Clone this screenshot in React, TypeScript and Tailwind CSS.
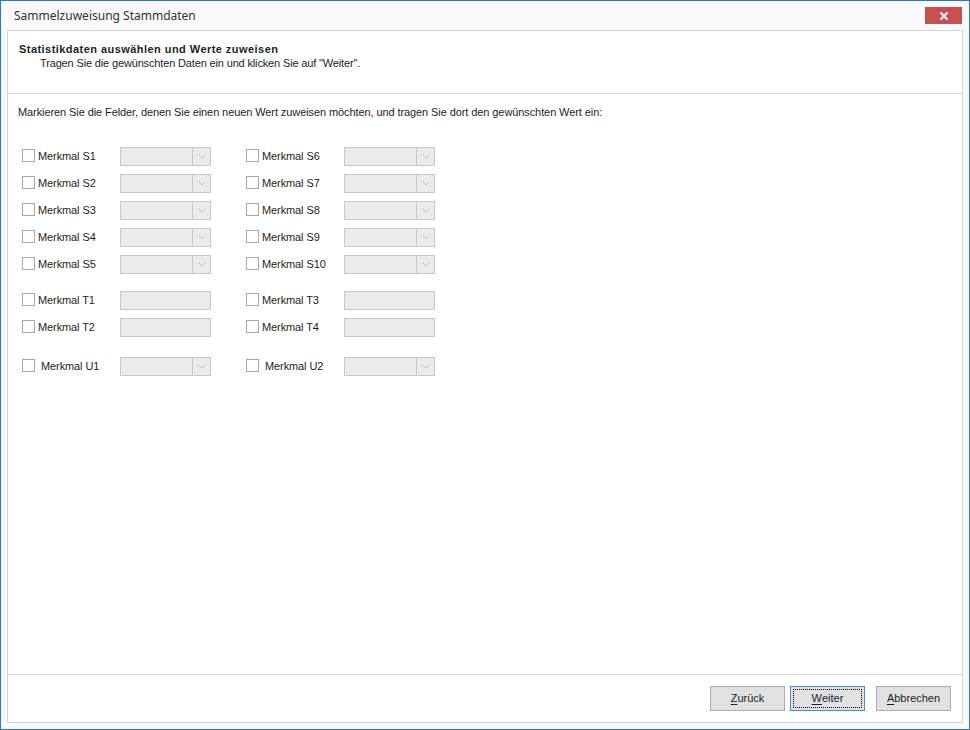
import React from "react"

type Field = { label: string; kind: "combo" | "text"; wide?: boolean }

const leftGroups: Field[][] = [
  [
    { label: "Merkmal S1", kind: "combo" },
    { label: "Merkmal S2", kind: "combo" },
    { label: "Merkmal S3", kind: "combo" },
    { label: "Merkmal S4", kind: "combo" },
    { label: "Merkmal S5", kind: "combo" },
  ],
  [
    { label: "Merkmal T1", kind: "text" },
    { label: "Merkmal T2", kind: "text" },
  ],
  [{ label: "Merkmal U1", kind: "combo", wide: true }],
]

const rightGroups: Field[][] = [
  [
    { label: "Merkmal S6", kind: "combo" },
    { label: "Merkmal S7", kind: "combo" },
    { label: "Merkmal S8", kind: "combo" },
    { label: "Merkmal S9", kind: "combo" },
    { label: "Merkmal S10", kind: "combo" },
  ],
  [
    { label: "Merkmal T3", kind: "text" },
    { label: "Merkmal T4", kind: "text" },
  ],
  [{ label: "Merkmal U2", kind: "combo", wide: true }],
]

function Chevron() {
  return (
    <svg width="8" height="5" viewBox="0 0 8 5" fill="none">
      <path d="M0.5 0.5 L4 4 L7.5 0.5" stroke="#c4c4c4" strokeWidth="1" />
    </svg>
  )
}

function Row({ field }: { field: Field }) {
  return (
    <div className="flex h-[27px] items-center">
      <div className="w-[13px] h-[13px] border border-[#a9a9a9] bg-white -mt-[2px]" />
      <span
        className={`${field.wide ? "ml-[6px] w-[79px]" : "ml-[3px] w-[82px]"} -mt-[1px] text-[11px] text-[#1e1e1e] tracking-[-0.1px]`}
      >
        {field.label}
      </span>
      {field.kind === "combo" ? (
        <div className="flex w-[91px] h-[19px] border border-[#c8c8c8] bg-[#ebebeb]">
          <div className="flex-1" />
          <div className="w-[18px] border-l border-[#c8c8c8] flex items-center justify-center">
            <Chevron />
          </div>
        </div>
      ) : (
        <div className="w-[91px] h-[19px] border border-[#c8c8c8] bg-[#ebebeb]" />
      )}
    </div>
  )
}

function Column({ groups }: { groups: Field[][] }) {
  return (
    <div className="flex flex-col w-[224px]">
      {groups.map((g, i) => (
        <div key={i} className={i === 1 ? "mt-[9px]" : i === 2 ? "mt-[12px]" : ""}>
          {g.map((f) => (
            <Row key={f.label} field={f} />
          ))}
        </div>
      ))}
    </div>
  )
}

function DialogButton({ label, hotkey, focused }: { label: string; hotkey: string; focused?: boolean }) {
  const rest = label.slice(1)
  return (
    <button
      className={`w-[75px] h-[25px] bg-[#e1e1e1] border text-[11px] text-[#1e1e1e] flex items-center justify-center p-[2px] ${
        focused ? "border-[#3c8fe3]" : "border-[#adadad]"
      }`}
    >
      <span
        className={`w-full h-full flex items-center justify-center ${
          focused ? "border border-dotted border-black" : ""
        }`}
      >
        <span className="underline underline-offset-2">{hotkey}</span>
        {rest}
      </span>
    </button>
  )
}

export default function App() {
  return (
    <div
      className="w-[970px] h-[730px] border border-[#2a77c2] bg-[#f9f9f9] flex flex-col"
      style={{ fontFamily: '"Liberation Sans", Arial, sans-serif' }}
    >
      {/* title bar */}
      <div className="h-[29px] flex items-start shrink-0">
        <span
          className="ml-[13px] mt-[6px] text-[12px] text-[#333] leading-[18px]"
          style={{ fontFamily: '"Noto Sans", "Open Sans", sans-serif' }}
        >
          Sammelzuweisung Stammdaten
        </span>
        <button className="ml-auto mr-[7px] mt-[6px] w-[37px] h-[17px] bg-[#c75050] flex items-center justify-center">
          <svg width="10" height="8" viewBox="0 0 10 8">
            <path d="M1.5 0.5 L8.5 7.5 M8.5 0.5 L1.5 7.5" stroke="white" strokeWidth="2" />
          </svg>
        </button>
      </div>

      {/* wizard panel */}
      <div className="ml-[6px] mr-[6px] mb-[6px] flex-1 border border-[#d6d6d6] bg-white flex flex-col">
        <div className="h-[63px] border-b border-[#d6d6d6] pl-[11px] pt-[11px] shrink-0">
          <div className="text-[11px] font-bold text-[#1e1e1e] leading-[14px] tracking-[0.45px]">
            Statistikdaten auswählen und Werte zuweisen
          </div>
          <div className="ml-[21px] text-[11px] text-[#1e1e1e] leading-[14px] tracking-[-0.15px]">
            Tragen Sie die gewünschten Daten ein und klicken Sie auf "Weiter".
          </div>
        </div>

        <div className="flex-1 pl-[10px] pt-[11px]">
          <div className="text-[11px] text-[#1e1e1e] leading-[14px] tracking-[-0.09px]">
            Markieren Sie die Felder, denen Sie einen neuen Wert zuweisen möchten, und tragen Sie dort den gewünschten Wert ein:
          </div>
          <div className="flex pl-[4px] mt-[24px]">
            <Column groups={leftGroups} />
            <Column groups={rightGroups} />
          </div>
        </div>

        <div className="h-[48px] border-t border-[#d6d6d6] flex items-start justify-end pr-[11px] pt-[11px] shrink-0">
          <DialogButton label="Zurück" hotkey="Z" />
          <div className="w-[5px]" />
          <DialogButton label="Weiter" hotkey="W" focused />
          <div className="w-[11px]" />
          <DialogButton label="Abbrechen" hotkey="A" />
        </div>
      </div>
    </div>
  )
}
